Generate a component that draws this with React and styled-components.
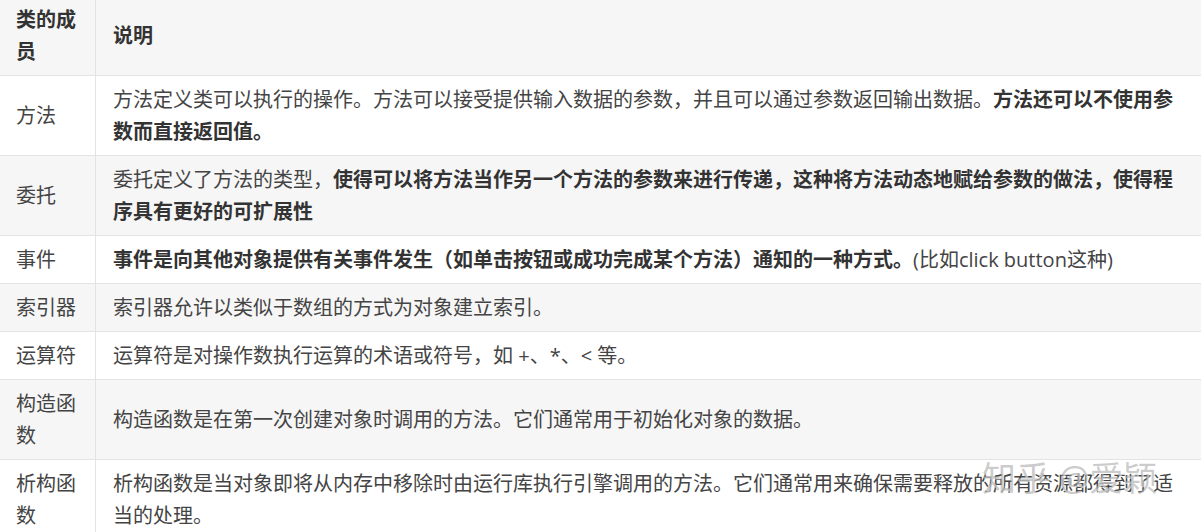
import React from 'react';
import styled, { createGlobalStyle } from 'styled-components';

const Global = createGlobalStyle`
  html, body { margin: 0; padding: 0; background: #fff; }
  body {
    font-family: "Open Sans", "Noto Sans CJK SC", sans-serif;
    font-size: 20px;
    color: #444;
    overflow: hidden;
  }
`;

const Page = styled.div`
  position: relative;
  width: 1201px;
  height: 532px;
  overflow: hidden;
`;

const Table = styled.div`
  display: flex;
  flex-direction: column;
  width: 1201px;
`;

const Row = styled.div`
  display: grid;
  grid-template-columns: 95px 1fr;
  background: ${p => (p.$shade ? '#f6f6f6' : '#fff')};
  border-bottom: 1px solid #e3e3e3;
`;

const Cell = styled.div`
  display: flex;
  align-items: center;
  min-width: 0;
  padding: ${p => (p.$head ? '4px 16px 7px 16px' : '8px 16px 7px 16px')};
  line-height: 32px;
  font-weight: ${p => (p.$head ? 700 : 400)};
  color: ${p => (p.$head ? '#333' : '#444')};
  & + & {
    border-left: 1px solid #e3e3e3;
    padding-left: 17px;
    padding-right: 16px;
  }
`;

const Text = styled.div`
  min-width: 0;
  flex: 1;
`;

const B = styled.b`
  font-weight: 700;
  color: #333;
`;

const Watermark = styled.div`
  position: absolute;
  left: 982px;
  top: 458px;
  font-size: 34px;
  line-height: 40px;
  font-weight: 400;
  color: rgba(160, 160, 160, 0.55);
  text-shadow: 1px 1px 0 rgba(255, 255, 255, 0.6);
  pointer-events: none;
  white-space: nowrap;
`;

const rows = [
  {
    name: '方法',
    desc: (
      <>
        方法定义类可以执行的操作。方法可以接受提供输入数据的参数，并且可以通过参数返回输出数据。
        <B>方法还可以不使用参数而直接返回值。</B>
      </>
    ),
  },
  {
    name: '委托',
    desc: (
      <>
        委托定义了方法的类型，
        <B>使得可以将方法当作另一个方法的参数来进行传递，这种将方法动态地赋给参数的做法，使得程序具有更好的可扩展性</B>
      </>
    ),
  },
  {
    name: '事件',
    desc: (
      <>
        <B>事件是向其他对象提供有关事件发生（如单击按钮或成功完成某个方法）通知的一种方式。</B>
        (比如click button这种)
      </>
    ),
  },
  { name: '索引器', desc: '索引器允许以类似于数组的方式为对象建立索引。' },
  { name: '运算符', desc: '运算符是对操作数执行运算的术语或符号，如 +、*、< 等。' },
  { name: '构造函数', desc: '构造函数是在第一次创建对象时调用的方法。它们通常用于初始化对象的数据。' },
  {
    name: '析构函数',
    desc: '析构函数是当对象即将从内存中移除时由运行库执行引擎调用的方法。它们通常用来确保需要释放的所有资源都得到了适当的处理。',
  },
];

export default function App() {
  return (
    <Page>
      <Global />
      <Table>
        <Row $shade>
          <Cell $head><Text>类的成员</Text></Cell>
          <Cell $head><Text>说明</Text></Cell>
        </Row>
        {rows.map((r, i) => (
          <Row key={r.name} $shade={i % 2 === 1}>
            <Cell><Text>{r.name}</Text></Cell>
            <Cell><Text>{r.desc}</Text></Cell>
          </Row>
        ))}
      </Table>
      <Watermark>知乎 @爱颖</Watermark>
    </Page>
  );
}
